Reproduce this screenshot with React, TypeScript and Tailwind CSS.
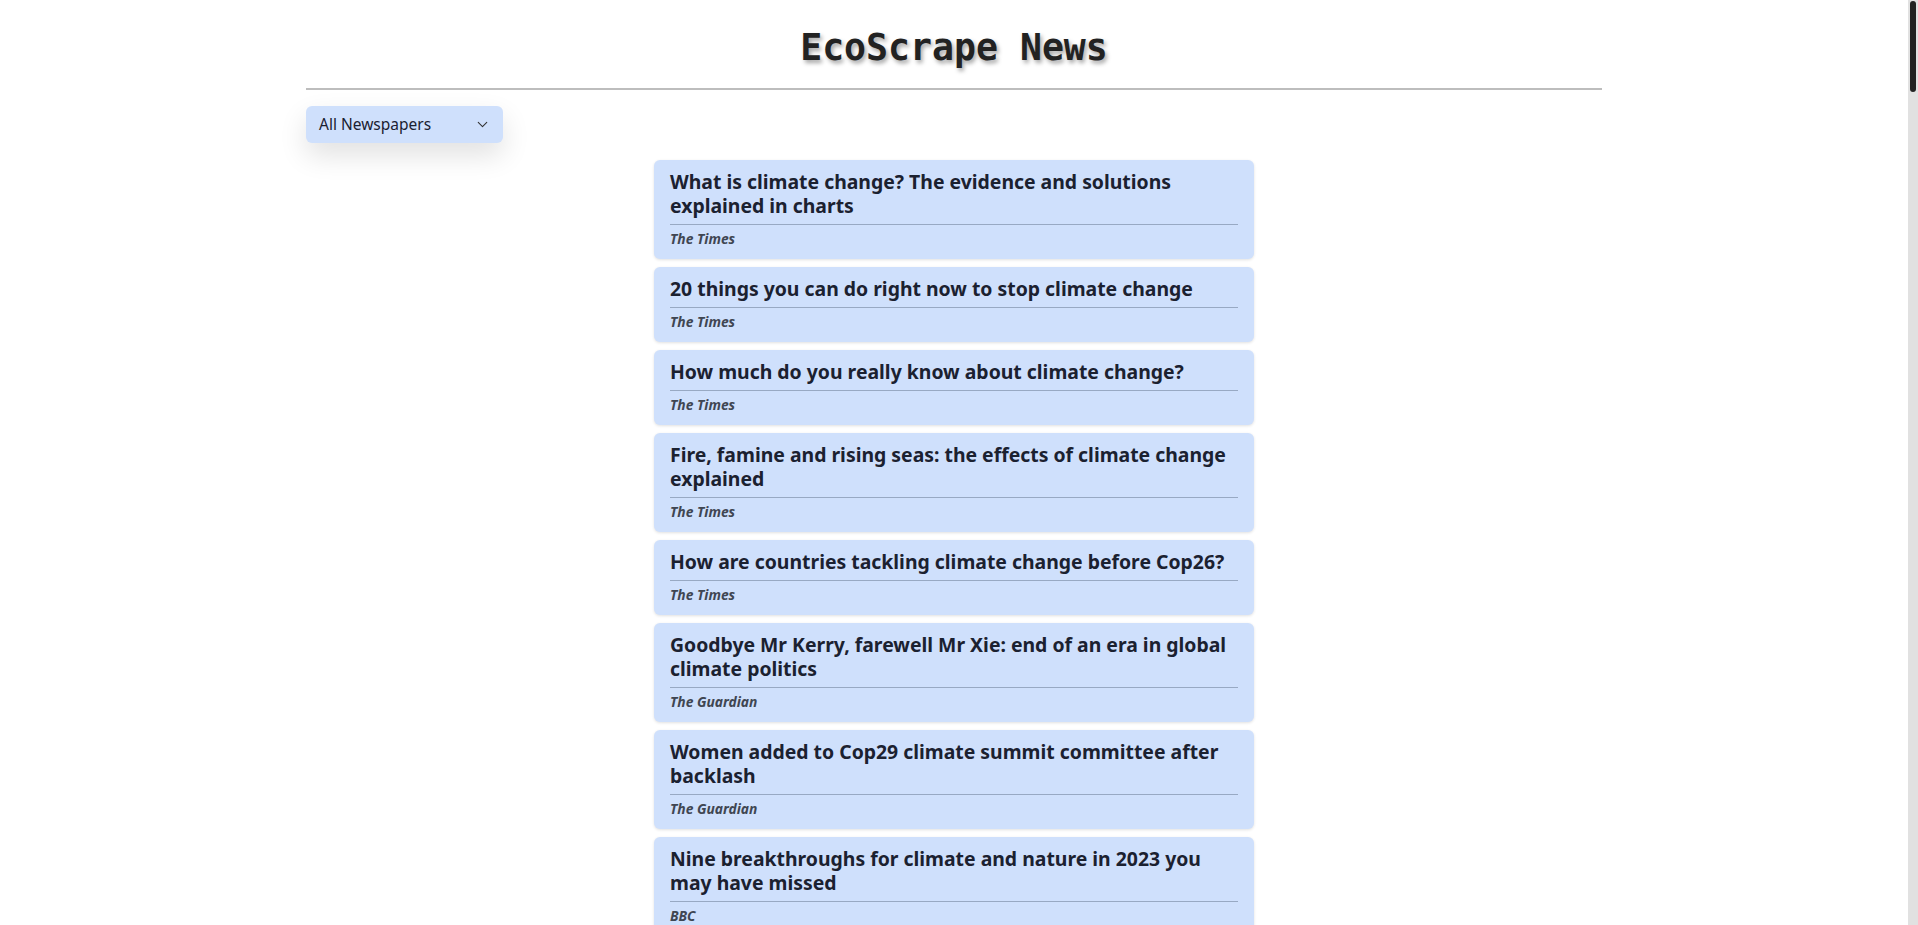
import { ChevronDown } from "lucide-react";

type Article = { title: string; source: string };

const headlines: Article[] = [
  { title: "What is climate change? The evidence and solutions explained in charts", source: "The Times" },
  { title: "20 things you can do right now to stop climate change", source: "The Times" },
  { title: "How much do you really know about climate change?", source: "The Times" },
  { title: "Fire, famine and rising seas: the effects of climate change explained", source: "The Times" },
  { title: "How are countries tackling climate change before Cop26?", source: "The Times" },
  { title: "Goodbye Mr Kerry, farewell Mr Xie: end of an era in global climate politics", source: "The Guardian" },
  { title: "Women added to Cop29 climate summit committee after backlash", source: "The Guardian" },
  { title: "Nine breakthroughs for climate and nature in 2023 you may have missed", source: "BBC" },
  { title: "Climate change: World's oceans suffer from record-breaking year of heat", source: "BBC" },
  { title: "What is the Paris climate agreement and why does it matter?", source: "BBC" },
  { title: "Extreme weather made more likely by climate change, scientists say", source: "The Guardian" },
  { title: "Why net zero targets are not enough to halt global heating", source: "The Guardian" },
];

// the live page pulls ~100 stories, pad the list out so the scroll length matches
const articles: Article[] = Array.from({ length: 104 }, (_, i) => headlines[i % headlines.length]);

function NewsCard({ article }: { article: Article }) {
  return (
    <article className="mb-2 rounded-md bg-[#cfe0fc] px-4 pt-[10px] pb-[12px] shadow-[0_1px_3px_rgba(0,0,0,0.12)]">
      <h2 className="border-b border-[#98a9c3] pb-[6px] text-[19.4px] font-bold leading-6 text-[#1b2130]">
        {article.title}
      </h2>
      <p className="mt-[6px] text-[13.8px] font-bold italic leading-4 text-[#3f4652]">{article.source}</p>
    </article>
  );
}

export default function App() {
  return (
    <div className="flex h-screen bg-white font-['Noto_Sans','Open_Sans',sans-serif]">
      <div className="flex-1 overflow-y-auto [scrollbar-width:none]">
        <div className="mx-auto w-[1296px]">
          <header className="border-b-2 border-[#bdbdbd] pt-[21px] pb-[12px] text-center">
            <h1 className="font-['DejaVu_Sans_Mono',monospace] text-[36.5px] font-bold leading-normal text-[#222] [text-shadow:2px_3px_4px_rgba(0,0,0,0.35)]">
              EcoScrape News
            </h1>
          </header>

          <div className="mt-[16px] flex h-[37px] w-[197px] items-center justify-between rounded-md bg-[#cfe0fc] pr-3 pl-[13px] text-[15.5px] text-[#1b2130] shadow-[0_12px_28px_rgba(0,0,0,0.12)]">
            <span>All Newspapers</span>
            <ChevronDown size={17} strokeWidth={1.5} className="text-[#333]" />
          </div>

          <main className="mx-auto mt-[17px] w-[600px] pb-6">
            {articles.map((a, i) => (
              <NewsCard key={i} article={a} />
            ))}
          </main>
        </div>
      </div>

      {/* scrollbar as the browser drew it */}
      <div className="w-[10px] shrink-0 bg-[#e1e1e1] px-[2px] pt-[1px]">
        <div className="h-[91px] rounded-full bg-[#222]" />
      </div>
    </div>
  );
}
